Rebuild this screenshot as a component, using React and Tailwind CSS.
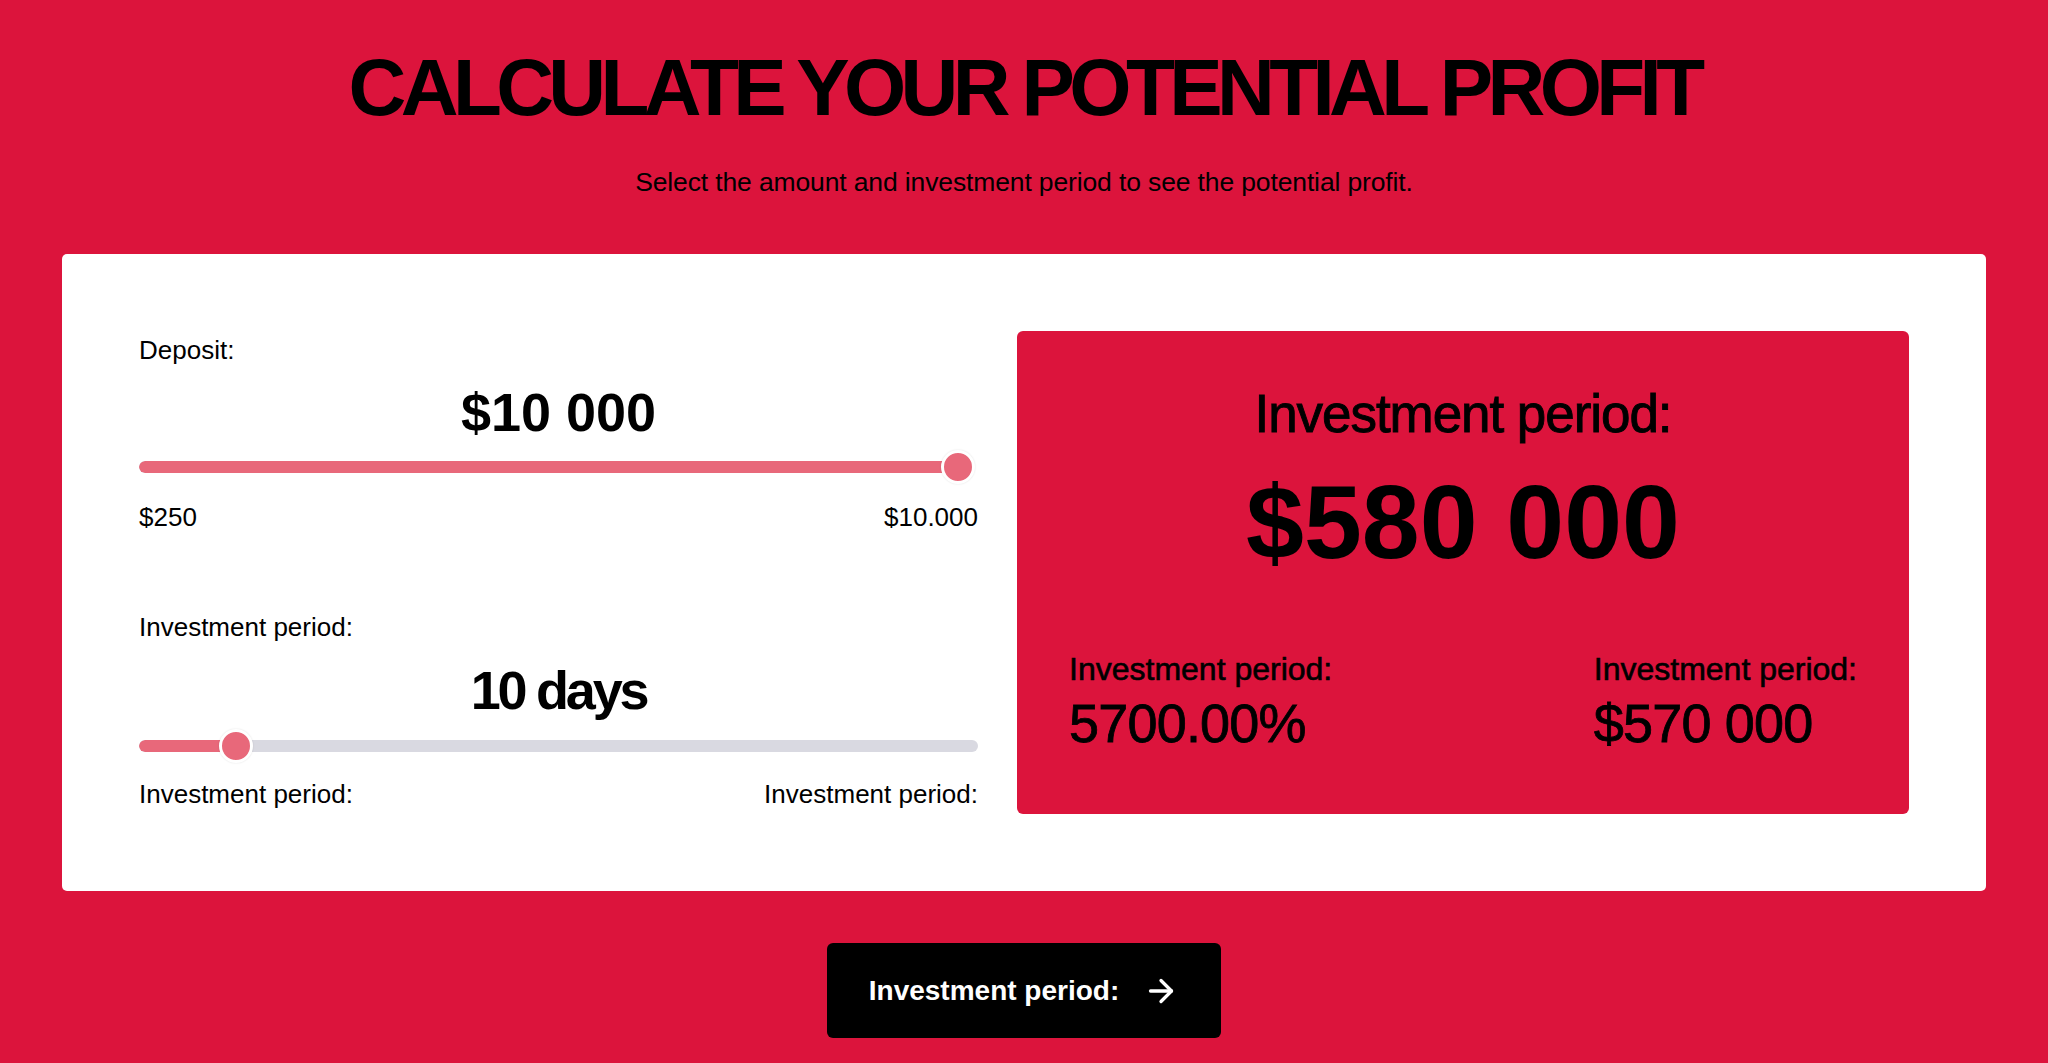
import React from "react";
import { ArrowRight } from "lucide-react";

function Slider({ pct, full }) {
  const travel = 839 - 34;
  const left = pct * travel - 3;
  return (
    <div className="relative h-[34px] w-full">
      <div
        className={
          (full ? "right-[10px] " : "right-0 ") +
          "absolute left-0 top-[11px] h-[12px] rounded-full bg-[#d9d9e1] overflow-hidden"
        }
      >
        <div
          className="h-full rounded-full bg-[#e8687a]"
          style={{ width: full ? "100%" : `${left + 17}px` }}
        />
      </div>
      <div
        className="absolute top-0 h-[34px] w-[34px] rounded-full bg-[#e8687a] border-[3px] border-white shadow-[0_0_2px_rgba(0,0,0,0.12)]"
        style={{ left: `${left}px` }}
      />
    </div>
  );
}

export default function App() {
  return (
    <div
      className="min-h-screen bg-[#dc143c] text-black pb-[40px]"
      style={{ fontFamily: '"Liberation Sans", Arial, sans-serif' }}
    >
      <h1 className="pt-[48px] text-center text-[80px] leading-[80px] font-bold tracking-[-0.07em]">
        CALCULATE YOUR POTENTIAL PROFIT
      </h1>
      <p className="mt-[40px] text-center text-[26.5px] leading-[28px] tracking-[-0.005em]">
        Select the amount and investment period to see the potential profit.
      </p>

      <div className="mx-[62px] mt-[58px] flex gap-[39px] rounded-[5px] bg-white p-[77px]">
        <div className="flex w-[839px] shrink-0 flex-col">
          <div className="mt-[4px] text-[26px] leading-[30px]">Deposit:</div>
          <div className="mt-[20px] text-center text-[54px] leading-[54px] font-bold">$10 000</div>
          <div className="mt-[11px]">
            <Slider pct={1} full />
          </div>
          <div className="mt-[18px] flex justify-between text-[26px] leading-[30px]">
            <span>$250</span>
            <span>$10.000</span>
          </div>

          <div className="mt-[80px] text-[26px] leading-[30px]">Investment period:</div>
          <div className="mt-[21px] text-center text-[54px] leading-[54px] font-bold tracking-[-0.06em]">10 days</div>
          <div className="mt-[12px]">
            <Slider pct={0.103} />
          </div>
          <div className="mt-[16px] flex justify-between text-[26px] leading-[30px]">
            <span>Investment period:</span>
            <span>Investment period:</span>
          </div>
        </div>

        <div className="flex h-[483px] flex-1 flex-col rounded-[6px] bg-[#dc143c] px-[52px] pt-[53px]">
          <div className="text-center text-[53px] leading-[60px] tracking-[-0.02em] [-webkit-text-stroke:0.9px_#000]">
            Investment period:
          </div>
          <div className="mt-[26px] text-center text-[104px] leading-[104px] font-bold">$580 000</div>
          <div className="mt-[77px] flex justify-between">
            <div className="flex flex-col gap-[8px]">
              <div className="text-[32px] leading-[36px] [-webkit-text-stroke:0.6px_#000]">Investment period:</div>
              <div className="text-[54px] leading-[56px] tracking-[-0.015em] [-webkit-text-stroke:0.8px_#000]">5700.00%</div>
            </div>
            <div className="flex flex-col gap-[8px]">
              <div className="text-[32px] leading-[36px] [-webkit-text-stroke:0.6px_#000]">Investment period:</div>
              <div className="text-[54px] leading-[56px] tracking-[-0.015em] [-webkit-text-stroke:0.8px_#000]">$570 000</div>
            </div>
          </div>
        </div>
      </div>

      <div className="mt-[52px] flex justify-center">
        <button className="flex h-[95px] w-[394px] items-center justify-center gap-[24px] rounded-[6px] bg-black text-[28px] font-bold text-white">
          <span>Investment period:</span>
          <ArrowRight size={36} strokeWidth={2.2} />
        </button>
      </div>
    </div>
  );
}
